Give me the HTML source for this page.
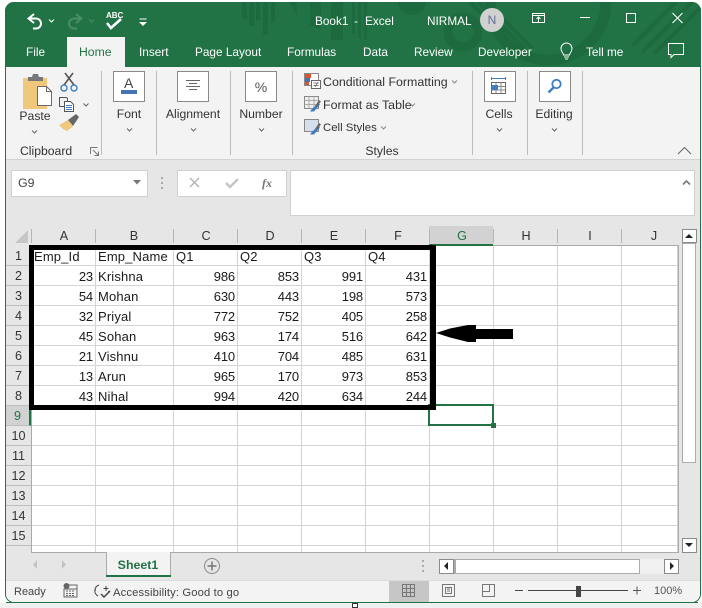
<!DOCTYPE html>
<html><head><meta charset="utf-8"><style>
html,body{margin:0;padding:0;width:702px;height:608px;overflow:hidden;background:#fff}
body{position:relative;font-family:"Liberation Sans",sans-serif;font-size:12px;color:#333}
div,span,svg{position:absolute}
.t{white-space:nowrap;line-height:16px}
.c{transform:translateX(-50%)}
.w{color:#fff;font-size:11.8px;top:44px}
.l{font-size:12.2px;color:#333}
.btn{background:#fff;border:1px solid #8a8a8a;width:30px;height:29px;top:71px}
.sep{width:1px;top:71px;height:84px;background:#bdbdbd}
.chev{width:7px;height:4px}
.ch{font-size:12.6px;color:#333;top:228px;transform:translateX(-50%);line-height:17px}
.cs{width:1px;height:14px;top:229px;background:#b5b5b5}
.rh{left:6px;width:25px;height:19px;text-align:center;font-size:12.6px;line-height:21px;color:#333;background:#e6e6e6;border-bottom:1px solid #bdbdbd}
table{position:absolute;left:0;top:0;border-collapse:separate;border-spacing:0;table-layout:fixed;background:#fff}
td{height:17px;padding:2px 2px 0;border-right:1px solid #d4d4d4;border-bottom:1px solid #d4d4d4;font-size:13px;line-height:17px;color:#1a1a1a;white-space:nowrap;overflow:hidden;box-sizing:content-box;letter-spacing:.15px}
td.n{text-align:right;padding-right:2px;letter-spacing:-.15px}
.sb{background:#fff;border:1px solid #8a8a8a;box-sizing:border-box}
</style></head><body>
<div style="left:0;top:603px;width:702px;height:5px;background:#f0f0f0"></div>
<div style="left:5px;top:2px;width:696px;height:601px;background:#e6e6e6;border-radius:9px;overflow:hidden;box-shadow:inset 0 0 0 1px #217346"></div>

<!-- title bar -->
<div style="left:5px;top:2px;width:696px;height:65px;background:#217346;border-radius:9px 9px 0 0;overflow:hidden"></div>
<svg style="left:5px;top:2px" width="696" height="65" viewBox="5 2 696 65" fill="none">
<g fill="#1c6a3e"><rect x="242" y="2" width="5" height="17"/><rect x="249" y="2" width="5" height="24"/><rect x="256" y="2" width="4" height="18"/><rect x="263" y="2" width="5" height="33"/><rect x="271" y="2" width="4" height="21"/><path d="M290 2h7v14z"/><path d="M310 2h11v28l-11-5z"/><rect x="331" y="2" width="12" height="38"/><path d="M398 2h28a14 13 0 0 1-28 0z"/><rect x="352" y="2" width="3" height="32"/><rect x="358" y="2" width="3" height="36"/><rect x="364" y="2" width="3" height="38"/></g>
<circle cx="463" cy="32" r="15" stroke="#1c6a3e" stroke-width="9"/>
<circle cx="548" cy="2" r="58" stroke="#1c6a3e" stroke-width="11"/>
<g stroke="#1c6a3e" stroke-width="4"><path d="M470 2l46 46M478 2l46 46M486 2l46 46"/><path d="M700 8l-46 46M692 2l-50 50M676 2l-44 44"/></g>
</svg>
<!-- undo/redo/spell -->
<svg style="left:26px;top:10px" width="130" height="24" fill="none">
<path d="M8 4L2.500 8.500 8 13" stroke="#fff" stroke-width="2"/><path d="M3 8.500h7a5 5 0 0 1 0 10H7" stroke="#fff" stroke-width="2"/>
<path d="M23 9.500l2.500 2.500 2.500-2.500" stroke="#fff"/>
<path d="M50 4l5.500 4.500L50 13" stroke="#4b8c69" stroke-width="2"/><path d="M55 8.500h-7a5 5 0 0 0 0 10h3" stroke="#4b8c69" stroke-width="2"/>
<path d="M63 9.500l2.500 2.500 2.500-2.500" stroke="#4b8c69"/>
<path d="M81 13l4 5 10-9" stroke="#fff" stroke-width="2.600"/>
<path d="M113.500 9h7" stroke="#fff"/><path d="M113 12h8l-4 4z" fill="#fff"/>
</svg>
<div class="t" style="left:106px;top:11px;color:#fff;font-size:8px;font-weight:bold;line-height:9px">ABC</div>
<div class="t" style="left:315px;top:13px;color:#fff;font-size:11.8px">Book1</div>
<div class="t" style="left:354px;top:13px;color:#fff;font-size:11.8px">-</div>
<div class="t" style="left:365px;top:13px;color:#fff;font-size:11.8px">Excel</div>
<div class="t" style="left:427px;top:13px;color:#fff;font-size:11.8px">NIRMAL</div>
<div style="left:480px;top:8px;width:24px;height:24px;border-radius:50%;background:#d1d1d1"></div>
<div class="t c" style="left:492px;top:12px;color:#5f6f90;font-size:12px">N</div>
<svg style="left:530px;top:10px" width="165" height="20" fill="none" stroke="#fff">
<rect x="2.500" y="3.500" width="12" height="9"/><path d="M2.500 5.500h12"/><path d="M8.500 12V7M6.500 9l2-2 2 2"/>
<path d="M50 7.500h10"/>
<rect x="96.500" y="3.500" width="9" height="9"/>
<path d="M142.500 3l10 10M152.500 3l-10 10" stroke-width="1.100"/>
</svg>

<!-- tabs -->
<div style="left:67px;top:37px;width:58px;height:30px;background:#f3f3f3"></div>
<div class="t w" style="left:26px">File</div>
<div class="t" style="left:79px;top:44px;color:#217346;font-size:12.2px">Home</div>
<div class="t w" style="left:139px">Insert</div>
<div class="t w" style="left:195px">Page Layout</div>
<div class="t w" style="left:287px">Formulas</div>
<div class="t w" style="left:363px">Data</div>
<div class="t w" style="left:414px">Review</div>
<div class="t w" style="left:478px">Developer</div>
<div class="t w" style="left:586px">Tell me</div>
<svg style="left:558px;top:42px" width="18" height="20" fill="none" stroke="#fff"><path d="M5.500 13c0-2-2.500-3-2.500-6.500a5.500 5.500 0 0 1 11 0c0 3.500-2.500 4.500-2.500 6.500z"/><path d="M6 15h5M7 17h3"/></svg>
<svg style="left:668px;top:43px" width="20" height="18" fill="none" stroke="#fff"><path d="M.5.500h15v11H6l-3 3v-3H.5z"/></svg>

<!-- ribbon -->
<div style="left:6px;top:67px;width:694px;height:92px;background:#f3f3f3;border-bottom:1px solid #d2d2d2"></div>
<div class="sep" style="left:101px"></div><div class="sep" style="left:156px"></div><div class="sep" style="left:230px"></div><div class="sep" style="left:292px"></div><div class="sep" style="left:472px"></div><div class="sep" style="left:527px"></div><div class="sep" style="left:582px"></div>

<svg style="left:20px;top:70px" width="70" height="68" fill="none">
<path d="M3 8h24v31H3z" fill="#f0c87c"/><path d="M8 7h4l1-3h5l1 3h4v4H8z" fill="#777"/>
<path d="M17.500 16.500h9l5 5v14h-14z" fill="#fff" stroke="#6a6a6a"/><path d="M26.500 16.500v5h5" stroke="#6a6a6a"/>
<path d="M45 3l9 12M53 3l-9 12" stroke="#555" stroke-width="1.600"/><circle cx="44" cy="18" r="3" stroke="#3f7fbf" stroke-width="1.400"/><circle cx="54" cy="18" r="3" stroke="#3f7fbf" stroke-width="1.400"/>
<path d="M39.500 27.500h7l1 1v8h-8z" stroke="#555" fill="#f3f3f3"/><path d="M44.500 31.500h6l3 3v7h-9z" stroke="#555" fill="#fff"/><path d="M46 35.500h6M46 37.500h6M46 39.500h6" stroke="#3f7fbf"/>
<path d="M39 55l9-5 5 7-2 1-4 3-4-2z" fill="#f0c87c"/><path d="M48 50l8-6 3 3-6 9z" fill="#666"/>
</svg>
<svg style="left:82px;top:102px" width="9" height="6" fill="none" stroke="#666"><path d="M1.500 1.500l2.500 2.500 2.500-2.500"/></svg>
<div class="t c l" style="left:35px;top:108px">Paste</div>
<svg class="chev" style="left:31px;top:130px" fill="none" stroke="#666"><path d="M1 .5l2.500 2.500L6 .5"/></svg>
<div class="t l" style="left:20px;top:143px">Clipboard</div>
<svg style="left:90px;top:147px" width="9" height="9" fill="none" stroke="#777"><path d="M.5 7V.5H7.500M3 3l5 5M8.500 4.500v4h-4"/></svg>

<div class="btn" style="left:113px"></div>
<div class="t" style="left:124px;top:75px;font-size:14px;color:#444;line-height:16px">A</div>
<div style="left:121px;top:90px;width:16px;height:4px;background:#4472b5"></div>
<div class="t c l" style="left:129px;top:106px">Font</div>
<svg class="chev" style="left:126px;top:128px" fill="none" stroke="#666"><path d="M1 .5l2.500 2.500L6 .5"/></svg>

<div class="btn" style="left:177px"></div>
<svg style="left:186px;top:80px" width="15" height="12" stroke="#666"><path d="M0 .5h14M3 3.500h8M0 6.500h14M3 9.500h8"/></svg>
<div class="t c l" style="left:193px;top:106px">Alignment</div>
<svg class="chev" style="left:190px;top:128px" fill="none" stroke="#666"><path d="M1 .5l2.500 2.500L6 .5"/></svg>

<div class="btn" style="left:245px"></div>
<div class="t c" style="left:261px;top:79px;font-size:14px;color:#555">%</div>
<div class="t c l" style="left:261px;top:106px">Number</div>
<svg class="chev" style="left:258px;top:128px" fill="none" stroke="#666"><path d="M1 .5l2.500 2.500L6 .5"/></svg>

<svg style="left:304px;top:73px" width="17" height="66" fill="none">
<rect x=".5" y=".5" width="14" height="12" stroke="#888" fill="#fff"/><rect x="1" y="1" width="6" height="4" fill="#d9542b"/><rect x="1" y="5" width="5" height="4" fill="#4472b5"/><rect x="1" y="9" width="4" height="3" fill="#d9542b"/><rect x="7.500" y="7.500" width="9" height="8" fill="#fff" stroke="#666"/><path d="M9.500 10h5M9.500 12.500h5M11 14l3-5" stroke="#555" stroke-width=".7"/>
<g transform="translate(0 23)"><rect x=".5" y=".5" width="14" height="12" stroke="#888" fill="#eee"/><path d="M.5 4.500h14M.5 8.500h14M5 .5v12M10 .5v12" stroke="#aaa"/><path d="M7 14l7-7 2 1.500-6 7H6z" fill="#3f7fbf"/><path d="M11 10l4-6 2 1.500-4 5z" fill="#666"/></g>
<g transform="translate(0 46)"><rect x=".5" y=".5" width="14" height="12" stroke="#888" fill="#d4deec"/><path d="M7 14l7-7 2 1.500-6 7H6z" fill="#3f7fbf"/><path d="M11 10l4-6 2 1.500-4 5z" fill="#666"/></g>
</svg>
<div class="t" style="left:323px;top:74px;font-size:12.4px;color:#333">Conditional Formatting</div>
<svg class="chev" style="left:451px;top:80px" fill="none" stroke="#888"><path d="M1 .5l2.500 2.500L6 .5"/></svg>
<div class="t" style="left:323px;top:97px;font-size:12.4px;color:#333">Format as Table</div>
<svg class="chev" style="left:409px;top:103px" fill="none" stroke="#888"><path d="M1 .5l2.500 2.500L6 .5"/></svg>
<div class="t" style="left:323px;top:120px;font-size:11.4px;color:#333">Cell Styles</div>
<svg class="chev" style="left:380px;top:126px" fill="none" stroke="#888"><path d="M1 .5l2.500 2.500L6 .5"/></svg>
<div class="t c l" style="left:382px;top:143px">Styles</div>

<div class="btn" style="left:484px"></div>
<svg style="left:491px;top:76px" width="17" height="20" fill="none"><path d="M.5 2.500h14M.5 1v3M14.500 1v3" stroke="#3f7fbf"/><rect x=".5" y="6.500" width="14" height="11" stroke="#666" fill="#fff"/><path d="M.5 10.500h14M.5 14h14M5 6.500v11M10 6.500v11" stroke="#888"/><rect x="1" y="9" width="6" height="5" fill="#3f7fbf"/></svg>
<div class="t c l" style="left:499px;top:106px">Cells</div>
<svg class="chev" style="left:496px;top:128px" fill="none" stroke="#666"><path d="M1 .5l2.500 2.500L6 .5"/></svg>

<div class="btn" style="left:539px"></div>
<svg style="left:547px;top:78px" width="16" height="16" fill="none"><circle cx="9.500" cy="6" r="4.200" stroke="#3f7fbf" stroke-width="1.800"/><path d="M6.500 9.500L1.500 14.500" stroke="#3f7fbf" stroke-width="2.500"/></svg>
<div class="t c l" style="left:554px;top:106px">Editing</div>
<svg class="chev" style="left:551px;top:128px" fill="none" stroke="#666"><path d="M1 .5l2.500 2.500L6 .5"/></svg>
<svg style="left:677px;top:146px" width="15" height="9" fill="none" stroke="#666"><path d="M1 8l6.500-6.500L14 8"/></svg>

<!-- formula bar -->
<div style="left:11px;top:170px;width:135px;height:25px;background:#fff;border:1px solid #d0d0d0"></div>
<div class="t" style="left:18px;top:175px;font-size:12.4px;color:#444">G9</div>
<svg style="left:133px;top:180px" width="8" height="5"><path d="M0 0h8L4 4.500z" fill="#777"/></svg>
<svg style="left:161px;top:177px" width="3" height="12" fill="#aaa"><rect y="0" width="2" height="2"/><rect y="5" width="2" height="2"/><rect y="10" width="2" height="2"/></svg>
<div style="left:177px;top:170px;width:108px;height:25px;background:#fff;border:1px solid #d0d0d0"></div>
<svg style="left:189px;top:177px" width="70" height="14" fill="none"><path d="M1 1l9 9M10 1l-9 9" stroke="#b5b5b5" stroke-width="1.500"/><path d="M37 6l4 4 8-8" stroke="#c4c4c4" stroke-width="2.500"/></svg>
<div class="t" style="left:262px;top:175px;font-family:'Liberation Serif',serif;font-style:italic;font-weight:bold;font-size:12px;color:#777">fx</div>
<div style="left:290px;top:170px;width:403px;height:44px;background:#fff;border:1px solid #d0d0d0"></div>
<svg style="left:682px;top:179px" width="9" height="7" fill="none" stroke="#777" stroke-width="1.600"><path d="M1 5.500l3.500-3.500L8 5.500"/></svg>

<!-- headers -->
<div style="left:6px;top:226px;width:672px;height:19px;background:#e6e6e6"></div>
<svg style="left:15px;top:230px" width="14" height="13"><path d="M13 0v13H0z" fill="#c6c6c6"/></svg>
<div style="left:429px;top:226px;width:64px;height:18px;background:#d2d2d2"></div>
<div style="left:429px;top:244px;width:64px;height:2px;background:#217346"></div>
<div style="left:31px;top:245px;width:398px;height:1px;background:#aaa"></div>
<div style="left:493px;top:245px;width:186px;height:1px;background:#aaa"></div>
<div class="cs" style="left:31px"></div><div class="cs" style="left:95px"></div><div class="cs" style="left:173px"></div><div class="cs" style="left:237px"></div><div class="cs" style="left:301px"></div><div class="cs" style="left:365px"></div><div class="cs" style="left:429px"></div><div class="cs" style="left:493px"></div><div class="cs" style="left:557px"></div><div class="cs" style="left:621px"></div>
<div class="t ch" style="left:64px">A</div><div class="t ch" style="left:134px">B</div><div class="t ch" style="left:206px">C</div><div class="t ch" style="left:270px">D</div><div class="t ch" style="left:334px">E</div><div class="t ch" style="left:398px">F</div><div class="t ch" style="left:462px;color:#217346">G</div><div class="t ch" style="left:526px">H</div><div class="t ch" style="left:590px">I</div><div class="t ch" style="left:654px">J</div>

<div class="rh" style="top:246px">1</div><div class="rh" style="top:266px">2</div><div class="rh" style="top:286px">3</div><div class="rh" style="top:306px">4</div><div class="rh" style="top:326px">5</div><div class="rh" style="top:346px">6</div><div class="rh" style="top:366px">7</div><div class="rh" style="top:386px">8</div>
<div class="rh" style="top:406px;background:#d2d2d2;color:#217346;border-right:2px solid #217346;width:23px">9</div>
<div class="rh" style="top:426px">10</div><div class="rh" style="top:446px">11</div><div class="rh" style="top:466px">12</div><div class="rh" style="top:486px">13</div><div class="rh" style="top:506px">14</div><div class="rh" style="top:526px">15</div>
<div style="left:6px;top:546px;width:25px;height:7px;background:#e6e6e6"></div>
<div style="left:31px;top:246px;width:1px;height:307px;background:#aaa"></div>

<!-- grid -->
<div style="left:32px;top:246px;height:306px;overflow:hidden;background:#fff;border-right:1px solid #aaa;border-bottom:1px solid #aaa;box-sizing:content-box;width:646px">
<table style="width:646px"><colgroup><col style="width:64px"><col style="width:78px"><col style="width:64px"><col style="width:64px"><col style="width:64px"><col style="width:64px"><col style="width:64px"><col style="width:64px"><col style="width:64px"><col style="width:56px"></colgroup>
<tr><td>Emp_Id</td><td>Emp_Name</td><td>Q1</td><td>Q2</td><td>Q3</td><td>Q4</td><td></td><td></td><td></td><td></td></tr>
<tr><td class="n">23</td><td>Krishna</td><td class="n">986</td><td class="n">853</td><td class="n">991</td><td class="n">431</td><td></td><td></td><td></td><td></td></tr>
<tr><td class="n">54</td><td>Mohan</td><td class="n">630</td><td class="n">443</td><td class="n">198</td><td class="n">573</td><td></td><td></td><td></td><td></td></tr>
<tr><td class="n">32</td><td>Priyal</td><td class="n">772</td><td class="n">752</td><td class="n">405</td><td class="n">258</td><td></td><td></td><td></td><td></td></tr>
<tr><td class="n">45</td><td>Sohan</td><td class="n">963</td><td class="n">174</td><td class="n">516</td><td class="n">642</td><td></td><td></td><td></td><td></td></tr>
<tr><td class="n">21</td><td>Vishnu</td><td class="n">410</td><td class="n">704</td><td class="n">485</td><td class="n">631</td><td></td><td></td><td></td><td></td></tr>
<tr><td class="n">13</td><td>Arun</td><td class="n">965</td><td class="n">170</td><td class="n">973</td><td class="n">853</td><td></td><td></td><td></td><td></td></tr>
<tr><td class="n">43</td><td>Nihal</td><td class="n">994</td><td class="n">420</td><td class="n">634</td><td class="n">244</td><td></td><td></td><td></td><td></td></tr>
<tr><td></td><td></td><td></td><td></td><td></td><td></td><td></td><td></td><td></td><td></td></tr>
<tr><td></td><td></td><td></td><td></td><td></td><td></td><td></td><td></td><td></td><td></td></tr>
<tr><td></td><td></td><td></td><td></td><td></td><td></td><td></td><td></td><td></td><td></td></tr>
<tr><td></td><td></td><td></td><td></td><td></td><td></td><td></td><td></td><td></td><td></td></tr>
<tr><td></td><td></td><td></td><td></td><td></td><td></td><td></td><td></td><td></td><td></td></tr>
<tr><td></td><td></td><td></td><td></td><td></td><td></td><td></td><td></td><td></td><td></td></tr>
<tr><td></td><td></td><td></td><td></td><td></td><td></td><td></td><td></td><td></td><td></td></tr>
<tr><td></td><td></td><td></td><td></td><td></td><td></td><td></td><td></td><td></td><td></td></tr>
</table></div>

<!-- selection, black box, arrow -->
<div style="left:428px;top:404px;width:66px;height:22px;border:2px solid #217346;box-sizing:border-box"></div>
<div style="left:491px;top:423px;width:5px;height:5px;background:#217346"></div>
<div style="left:29px;top:245px;width:407px;height:165px;border:5px solid #000;border-right-width:6px;box-sizing:border-box"></div>
<svg style="left:434px;top:323px" width="82" height="22"><path d="M2 10L16 5.500 34 2h8v4h37v10H42v3h-8L16 14.500z" fill="#000"/></svg>

<!-- scrollbars -->
<div style="left:680px;top:226px;width:20px;height:355px;background:#e6e6e6"></div>
<div style="left:682px;top:243px;width:14px;height:220px;background:#fff;border:1px solid #ababab;box-sizing:border-box"></div>
<div class="sb" style="left:682px;top:229px;width:15px;height:14px"></div>
<svg style="left:685px;top:233px" width="9" height="6"><path d="M0 5h8L4 1z" fill="#222"/></svg>
<div class="sb" style="left:682px;top:538px;width:15px;height:15px"></div>
<svg style="left:685px;top:543px" width="9" height="6"><path d="M0 0h8L4 4z" fill="#222"/></svg>

<!-- sheet bar -->
<div style="left:6px;top:553px;width:674px;height:27px;background:#e6e6e6"></div>
<div style="left:31px;top:552px;width:648px;height:1px;background:#aaa"></div>
<svg style="left:32px;top:560px" width="36" height="10" fill="#c4c4c4"><path d="M5 0v9L1 4.500z"/><path d="M30 0v9l4-4.500z"/></svg>
<div style="left:106px;top:552px;width:65px;height:25px;background:#f3f3f3;border-left:1px solid #aaa;border-right:1px solid #aaa;box-sizing:border-box"></div>
<div style="left:106px;top:575px;width:65px;height:2px;background:#217346"></div>
<div class="t c" style="left:138px;top:557px;color:#217346;font-weight:bold;font-size:12.4px">Sheet1</div>
<svg style="left:203px;top:557px" width="18" height="18" fill="none" stroke="#888"><circle cx="9" cy="9" r="7.500"/><path d="M4.500 9h9M9 4.500v9" stroke-width="1.500" stroke="#777"/></svg>
<svg style="left:422px;top:560px" width="4" height="12" fill="#aaa"><rect width="2" height="2"/><rect y="5" width="2" height="2"/><rect y="10" width="2" height="2"/></svg>
<div style="left:439px;top:559px;width:240px;height:15px;background:#f0f0f0"></div>
<div class="sb" style="left:439px;top:559px;width:15px;height:15px"></div>
<svg style="left:443px;top:562px" width="6" height="9"><path d="M5 0v8L1 4z" fill="#222"/></svg>
<div style="left:454px;top:559px;width:186px;height:15px;background:#fff;border:1px solid #ababab;border-left-width:2px;box-sizing:border-box"></div>
<div class="sb" style="left:664px;top:559px;width:15px;height:15px"></div>
<svg style="left:669px;top:562px" width="6" height="9"><path d="M1 0v8l4-4z" fill="#222"/></svg>

<!-- status bar -->
<div style="left:6px;top:581px;width:694px;height:21px;background:#f3f3f3;border-radius:0 0 8px 8px"></div>
<div style="left:6px;top:580px;width:694px;height:1px;background:#dcdcdc"></div>
<div style="left:6px;top:602px;width:692px;height:1px;background:#217346"></div>
<div class="t" style="left:14px;top:584px;font-size:11px;color:#444">Ready</div>
<svg style="left:63px;top:583px" width="15" height="15"><circle cx="3.500" cy="3" r="3" fill="#666"/><path d="M6 2h8v12H1V6h13" fill="none" stroke="#666"/><path d="M3 8h9M3 10.500h9M3 12.500h9" stroke="#666" stroke-dasharray="2 1"/></svg>
<svg style="left:94px;top:583px" width="20" height="17" fill="none" stroke="#444"><path d="M5 2a6 6 0 0 0-1 11M2 7H.5M12 3v5M9.500 5.500h5M14.500 8v2"/><path d="M7 11l3 3 6-6" stroke-width="1.500"/></svg>
<div class="t" style="left:113px;top:585px;font-size:11.2px;color:#444;letter-spacing:.15px">Accessibility: Good to go</div>
<div style="left:389px;top:581px;width:40px;height:21px;background:#c6c6c6"></div>
<svg style="left:402px;top:584px" width="15" height="15" fill="none" stroke="#777"><path d="M.5.500h12v12H.5zM4.500.500v12M8.500.500v12M.5 4.500h12M.5 8.500h12"/></svg>
<svg style="left:442px;top:584px" width="15" height="15" fill="none" stroke="#777"><path d="M.5.500h12v12H.5z"/><path d="M3.500 3.500h6v6h-6zM5 5h3M5 7h3"/></svg>
<svg style="left:482px;top:584px" width="15" height="15" fill="none" stroke="#777"><path d="M.5.500h12v12H.5zM.5 7.500h7v-7"/></svg>
<div style="left:515px;top:590px;width:8px;height:1px;background:#444"></div>
<div style="left:528px;top:590px;width:100px;height:1px;background:#444"></div>
<div style="left:576px;top:586px;width:5px;height:11px;background:#444"></div>
<svg style="left:633px;top:586px" width="9" height="10" stroke="#555"><path d="M0 4.500h8M4 .5v8"/></svg>
<div class="t" style="left:654px;top:583px;font-size:11px;color:#555">100%</div>
<div style="left:352px;top:603px;width:6px;height:5px;border:1px solid #333;background:#fff;box-sizing:border-box"></div>
</body></html>
